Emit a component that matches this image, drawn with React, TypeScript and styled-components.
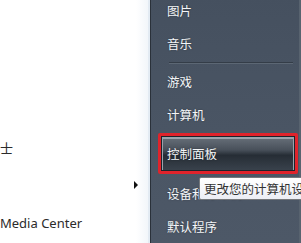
import React from "react";
import styled, { createGlobalStyle } from "styled-components";

const GlobalStyle = createGlobalStyle`
  html, body {
    margin: 0;
    padding: 0;
    background: #ffffff;
  }
  #root {
    width: 301px;
    height: 243px;
  }
`;

const Frame = styled.div`
  position: relative;
  display: flex;
  width: 301px;
  height: 243px;
  overflow: hidden;
  font-family: "Noto Sans CJK SC", "Noto Sans", sans-serif;
  font-size: 12px;
`;

const LeftPane = styled.div`
  width: 148px;
  flex-shrink: 0;
  display: flex;
  flex-direction: column;
  padding-top: 128px;
  background: linear-gradient(90deg, #ffffff 0%, #ffffff 92%, #f2f6fa 100%);
  border-right: 2px solid #e3ebf3;
`;

const LeftRow = styled.div<{ $end?: boolean }>`
  height: 38px;
  display: flex;
  align-items: center;
  justify-content: ${(p) => (p.$end ? "flex-end" : "flex-start")};
  padding-right: ${(p) => (p.$end ? "10px" : "0")};
  color: #2b2b2b;
  font-family: "Noto Sans", "Noto Sans CJK SC", sans-serif;
  font-size: 13px;
  white-space: nowrap;
`;

const Arrow = styled.span`
  width: 0;
  height: 0;
  border-top: 4px solid transparent;
  border-bottom: 4px solid transparent;
  border-left: 4px solid #111111;
`;

const RightPane = styled.div`
  flex: 1;
  display: flex;
  flex-direction: column;
  margin-top: -6px;
  background: linear-gradient(180deg, #45505f 0%, #4a5564 55%, #4d5867 100%);
  border-left: 1px solid #2a313a;
  box-shadow: inset -2px 0 0 #58636f;
`;

const Item = styled.div<{ $active?: boolean }>`
  height: ${(p) => (p.$active ? "36px" : "34px")};
  display: flex;
  align-items: center;
  margin: ${(p) => (p.$active ? "2px 3px 2px 7px" : "0 0 0 16px")};
  padding-left: ${(p) => (p.$active ? "6px" : "0")};
  color: #f4f6f8;
  font-size: 12.5px;
  text-shadow: 0 0 2px rgba(0, 0, 0, 0.35);
  white-space: nowrap;
  ${(p) =>
    p.$active &&
    `
    border: 3px solid #e0232b;
    border-radius: 2px;
    box-shadow: inset 0 0 0 1px #1d232b, inset 0 1px 0 2px #9aa3ac;
    background: linear-gradient(180deg, #6a737c 0%, #48505a 40%, #262d35 55%, #3a434d 100%);
  `}
`;

const Separator = styled.div`
  height: 1px;
  margin: 1px 8px 1px 18px;
  background: #343d48;
  border-bottom: 1px solid #5c6774;
`;

const Tooltip = styled.div`
  position: absolute;
  left: 199px;
  top: 177px;
  height: 21px;
  display: flex;
  align-items: center;
  padding: 0 4px;
  color: #333333;
  font-size: 12.5px;
  white-space: nowrap;
  background: linear-gradient(180deg, #ffffff 0%, #eceef4 100%);
  border: 1px solid #76797c;
  border-radius: 2px;
`;

const upperItems = ["图片", "音乐"];
const lowerItems = ["游戏", "计算机"];

export default function App() {
  return (
    <Frame>
      <GlobalStyle />
      <LeftPane>
        <LeftRow>士</LeftRow>
        <LeftRow $end>
          <Arrow />
        </LeftRow>
        <LeftRow>Media Center</LeftRow>
      </LeftPane>
      <RightPane>
        {upperItems.map((t) => (
          <Item key={t}>{t}</Item>
        ))}
        <Separator />
        {lowerItems.map((t) => (
          <Item key={t}>{t}</Item>
        ))}
        <Item $active>控制面板</Item>
        <Item>设备和打印机</Item>
        <Item>默认程序</Item>
      </RightPane>
      <Tooltip>更改您的计算机设置</Tooltip>
    </Frame>
  );
}
